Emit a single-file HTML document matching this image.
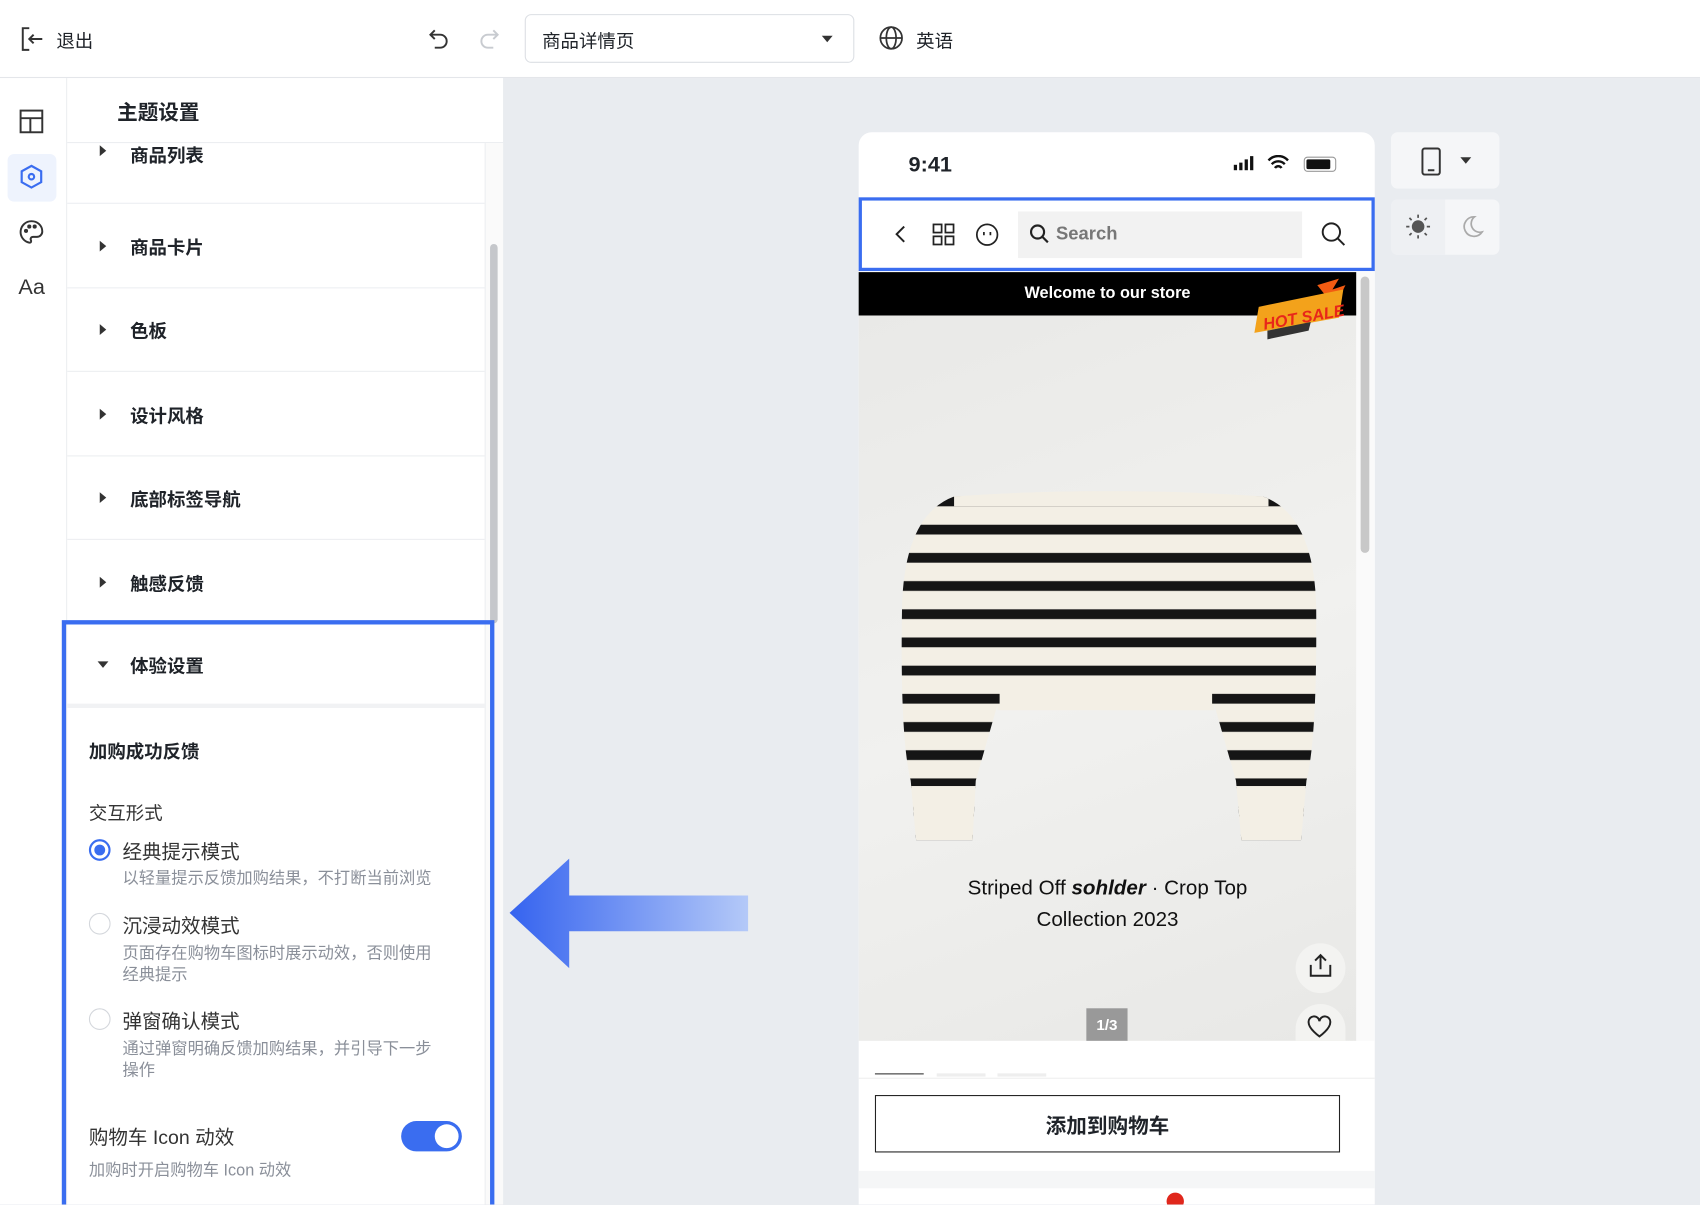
<!DOCTYPE html>
<html><head><meta charset="utf-8">
<style>
*{box-sizing:border-box;margin:0;padding:0}
html,body{width:1700px;height:1204px;overflow:hidden;background:#e9ecf0}
body{font-family:"Liberation Sans","Noto Sans CJK SC",sans-serif;color:#1f2329}
#w{position:absolute;left:0;top:0;width:1568px;height:1111px;transform:scale(1.08418);transform-origin:0 0;background:#e9ecf0;overflow:hidden}
.a{position:absolute}
.top{left:0;top:0;width:1568px;height:72px;background:#fff;border-bottom:1px solid #e4e6ea}
.rail{left:0;top:72px;width:62px;height:1039px;background:#fff;border-right:1px solid #eceef1}
.panel{left:62px;top:72px;width:402px;height:1039px;background:#fff}
.row{position:absolute;left:62px;width:385px;height:77px;border-bottom:1px solid #eceef1;font-size:17px;font-weight:bold;color:#1f2329}
.row .tri{position:absolute;left:30px;top:50%;margin-top:-5px;width:0;height:0;border-top:5px solid transparent;border-bottom:5px solid transparent;border-left:6px solid #333}
.row span{position:absolute;left:58px;top:50%;transform:translateY(-50%)}
.t{position:absolute;white-space:nowrap}
.radio{position:absolute;left:82px;width:20px;height:20px;border-radius:50%;border:1.5px solid #d4d7dc;background:#fff}
.sub{font-size:15px;color:#8a8f99;line-height:20px}
</style></head><body><div id="w">
<div class="a top"></div>
<svg class="a" style="left:18px;top:24px" width="24" height="24" viewBox="0 0 24 24" fill="none" stroke="#333" stroke-width="1.8"><path d="M9 2H3v20h6"/><path d="M21 12H9M13 8l-4 4 4 4"/></svg>
<div class="t" style="left:52px;top:24px;font-size:17px">退出</div>
<svg class="a" style="left:394px;top:25px" width="22" height="22" viewBox="0 0 22 22" fill="none" stroke="#333" stroke-width="1.8"><path d="M7 3L3 7l4 4"/><path d="M3 7h9a6 6 0 0 1 0 12H7"/></svg>
<svg class="a" style="left:440px;top:25px" width="22" height="22" viewBox="0 0 22 22" fill="none" stroke="#c8cbd0" stroke-width="1.8"><path d="M15 3l4 4-4 4"/><path d="M19 7h-9a6 6 0 0 0 0 12h5"/></svg>
<div class="a" style="left:484px;top:13px;width:304px;height:45px;border:1px solid #dcdfe4;border-radius:6px"></div>
<div class="t" style="left:500px;top:24px;font-size:17px">商品详情页</div>
<div class="a" style="left:758px;top:33px;border-left:5px solid transparent;border-right:5px solid transparent;border-top:6px solid #333"></div>
<svg class="a" style="left:810px;top:23px" width="24" height="24" viewBox="0 0 24 24" fill="none" stroke="#333" stroke-width="1.6"><circle cx="12" cy="12" r="10"/><ellipse cx="12" cy="12" rx="4.5" ry="10"/><path d="M2 12h20"/></svg>
<div class="t" style="left:845px;top:24px;font-size:17px">英语</div>

<div class="a rail"></div>
<svg class="a" style="left:17px;top:100px" width="24" height="24" viewBox="0 0 24 24" fill="none" stroke="#333" stroke-width="1.8"><rect x="2" y="2" width="20" height="20"/><path d="M2 9h20M11 9v13"/></svg>
<div class="a" style="left:7px;top:142px;width:45px;height:44px;background:#eef3fd;border-radius:6px"></div>
<svg class="a" style="left:17px;top:151px" width="24" height="24" viewBox="0 0 24 24" fill="none" stroke="#3a6df0" stroke-width="2"><path d="M12 2l9 5v10l-9 5-9-5V7z"/><circle cx="12" cy="12" r="2.5"/></svg>
<svg class="a" style="left:17px;top:202px" width="24" height="24" viewBox="0 0 24 24" fill="none" stroke="#333" stroke-width="1.8"><path d="M12 2a10 10 0 0 0-2 19.8c1.5.3 2.2-1 1.5-2.3-.8-1.5.3-3 2-3H17a5 5 0 0 0 5-5C22 6 17.5 2 12 2z"/><circle cx="7" cy="11" r="1" fill="#333"/><circle cx="10" cy="7" r="1" fill="#333"/><circle cx="15" cy="7" r="1" fill="#333"/></svg>
<div class="t" style="left:17px;top:254px;font-size:20px;color:#333">Aa</div>

<div class="a panel"></div>
<div class="t" style="left:108px;top:89px;font-size:19px;font-weight:bold">主题设置</div>
<div class="a" style="left:62px;top:131px;width:402px;height:1px;background:#eceef1"></div>
<div class="row" style="top:111px"><i class="tri" style="margin-top:-15px"></i><span style="margin-top:-7px">商品列表</span></div>
<div class="row" style="top:189px"><i class="tri"></i><span>商品卡片</span></div>
<div class="row" style="top:266px"><i class="tri"></i><span>色板</span></div>
<div class="row" style="top:344px"><i class="tri"></i><span>设计风格</span></div>
<div class="row" style="top:421px"><i class="tri"></i><span>底部标签导航</span></div>
<div class="row" style="top:499px"><i class="tri"></i><span>触感反馈</span></div>
<div class="a" style="left:447px;top:132px;width:17px;height:979px;background:#fafafa;border-left:1px solid #eceef1"></div>
<div class="a" style="left:452px;top:225px;width:7px;height:350px;background:#c5c7cb;border-radius:4px"></div>

<div class="row" style="top:576px;border-bottom:4px solid #f1f2f4"><i class="tri" style="left:28px;margin-top:-3px;border-left:5px solid transparent;border-right:5px solid transparent;border-top:6px solid #333;border-bottom:0"></i><span>体验设置</span></div>
<div class="t" style="left:82px;top:679px;font-size:17px;font-weight:bold">加购成功反馈</div>
<div class="t" style="left:82px;top:736px;font-size:17px;color:#333">交互形式</div>
<div class="radio" style="top:774px;border:2px solid #3a6df0"><div style="position:absolute;left:3px;top:3px;width:10px;height:10px;border-radius:50%;background:#3a6df0"></div></div>
<div class="t" style="left:113px;top:772px;font-size:18px;color:#333">经典提示模式</div>
<div class="t sub" style="left:113px;top:801px">以轻量提示反馈加购结果，不打断当前浏览</div>
<div class="radio" style="top:842px"></div>
<div class="t" style="left:113px;top:840px;font-size:18px;color:#333">沉浸动效模式</div>
<div class="t sub" style="left:113px;top:870px">页面存在购物车图标时展示动效，否则使用<br>经典提示</div>
<div class="radio" style="top:930px"></div>
<div class="t" style="left:113px;top:928px;font-size:18px;color:#333">弹窗确认模式</div>
<div class="t sub" style="left:113px;top:958px">通过弹窗明确反馈加购结果，并引导下一步<br>操作</div>
<div class="t" style="left:82px;top:1035px;font-size:18px;color:#333">购物车 Icon 动效</div>
<div class="a" style="left:370px;top:1034px;width:56px;height:28px;border-radius:14px;background:#3a6df0"><div style="position:absolute;right:3px;top:3px;width:22px;height:22px;border-radius:50%;background:#fff"></div></div>
<div class="t sub" style="left:82px;top:1070px">加购时开启购物车 Icon 动效</div>
<div class="a" style="left:57px;top:572px;width:399px;height:545px;border:4px solid #3a6df0"></div>

<svg class="a" style="left:468px;top:790px" width="226" height="105" viewBox="0 0 226 105"><defs><linearGradient id="g" x1="0" x2="1"><stop offset="0" stop-color="#3563ef"/><stop offset="1" stop-color="#b4c9f8"/></linearGradient></defs><path d="M2 52L57 2v34h165v33H57v34z" fill="url(#g)"/></svg>

<div class="a" style="left:792px;top:122px;width:476px;height:989px;background:#fff;border-radius:12px 12px 0 0"></div>
<div class="t" style="left:838px;top:141px;font-size:20px;font-weight:bold">9:41</div>
<svg class="a" style="left:1136px;top:143px" width="100" height="18" viewBox="0 0 100 18"><rect x="2" y="9" width="3" height="5" fill="#111"/><rect x="7" y="7" width="3" height="7" fill="#111"/><rect x="12" y="4" width="3" height="10" fill="#111"/><rect x="17" y="1" width="3" height="13" fill="#111"/><path d="M34 5a12 12 0 0 1 18 0M37 8.5a8 8 0 0 1 12 0M40 12a3.5 3.5 0 0 1 6 0" stroke="#111" stroke-width="2.2" fill="none"/><rect x="67" y="2" width="29" height="13" rx="3" fill="none" stroke="#999" stroke-width="1"/><rect x="69" y="4" width="22" height="9" rx="1.5" fill="#111"/></svg>
<div class="a" style="left:792px;top:182px;width:476px;height:68px;border:3px solid #3a6df0"></div>
<svg class="a" style="left:820px;top:205px" width="22" height="22" viewBox="0 0 22 22" fill="none" stroke="#222" stroke-width="1.8"><path d="M14 4l-7 7 7 7"/></svg>
<svg class="a" style="left:859px;top:205px" width="23" height="23" viewBox="0 0 23 23" fill="none" stroke="#222" stroke-width="1.6"><rect x="2" y="2" width="7.5" height="7.5"/><rect x="13" y="2" width="7.5" height="7.5"/><rect x="2" y="13" width="7.5" height="7.5"/><rect x="13" y="13" width="7.5" height="7.5"/></svg>
<svg class="a" style="left:899px;top:205px" width="23" height="23" viewBox="0 0 23 23" fill="none" stroke="#222" stroke-width="1.6"><circle cx="11.5" cy="11.5" r="9.5"/><path d="M8.5 9v3M14.5 9v3"/></svg>
<div class="a" style="left:939px;top:195px;width:262px;height:43px;background:#f2f2f2"></div>
<svg class="a" style="left:948px;top:205px" width="22" height="22" viewBox="0 0 22 22" fill="none" stroke="#222" stroke-width="2"><circle cx="9" cy="9" r="6"/><path d="M13.5 13.5l5 5"/></svg>
<div class="t" style="left:974px;top:206px;font-size:17px;font-weight:bold;color:#777">Search</div>
<svg class="a" style="left:1217px;top:203px" width="26" height="26" viewBox="0 0 26 26" fill="none" stroke="#222" stroke-width="1.8"><circle cx="11" cy="11" r="8"/><path d="M17 17l6 6"/></svg>
<div class="a" style="left:792px;top:251px;width:459px;height:40px;background:#000"></div>
<div class="t" style="left:792px;top:262px;width:459px;text-align:center;font-size:15px;font-weight:bold;color:#fff">Welcome to our store</div>
<div class="a" style="left:792px;top:291px;width:459px;height:669px;background:linear-gradient(160deg,#e9e9e7,#f1f1ef 50%,#e8e8e6)"></div>
<svg class="a" style="left:1155px;top:255px" width="92" height="60" viewBox="0 0 92 60"><path d="M60 8l20-6-6 10 12-4-10 20z" fill="#f25b12"/><path d="M6 28L84 12l-4 26L2 52z" fill="#f3a21b"/><text x="10" y="44" font-family="Liberation Sans" font-style="italic" font-weight="bold" font-size="15" fill="#e8261a" transform="rotate(-10 40 40)">HOT SALE</text><path d="M14 50l40-8-2 8-38 8z" fill="#333"/></svg>
<div class="a" style="left:1251px;top:251px;width:17px;height:709px;background:#fafafa"></div>
<div class="a" style="left:1255px;top:255px;width:8px;height:255px;background:#c8c8c8;border-radius:4px"></div>
<svg class="a" style="left:825px;top:445px" width="400" height="340" viewBox="825 445 400 340">
<defs><pattern id="st" x="0" y="470" width="400" height="26" patternUnits="userSpaceOnUse"><rect width="400" height="26" fill="#f3efe5"/><rect y="14" width="400" height="9" fill="#151515"/></pattern>
<clipPath id="c"><path d="M880 458Q1020 448 1165 458Q1212 475 1214 560Q1215 680 1205 720L1200 775L1145 775L1140 720L1120 650L1120 655L920 655L920 650L900 720L897 775L845 775L840 720Q830 680 832 560Q834 475 880 458z"/></clipPath></defs>
<g clip-path="url(#c)"><rect x="825" y="445" width="400" height="340" fill="url(#st)"/><rect x="835" y="725" width="380" height="60" fill="#f3efe5"/><rect x="922" y="628" width="196" height="27" fill="#f3efe5"/><rect x="880" y="445" width="290" height="22" fill="#f3efe5"/></g>
</svg>
<div class="t" style="left:792px;top:805px;width:459px;text-align:center;font-size:19px;line-height:29px;color:#111">Striped Off <i style="font-weight:bold">sohlder</i> · Crop Top<br>Collection 2023</div>
<div class="a" style="left:1195px;top:870px;width:46px;height:46px;border-radius:50%;background:#f3f3f1"></div>
<svg class="a" style="left:1205px;top:878px" width="26" height="26" viewBox="0 0 26 26" fill="none" stroke="#222" stroke-width="1.8"><path d="M13 3v13M8 8l5-5 5 5M4 12v10h18V12"/></svg>
<div class="a" style="left:1195px;top:926px;width:46px;height:34px;border-radius:23px 23px 0 0;background:#f3f3f1"></div>
<svg class="a" style="left:1204px;top:935px" width="26" height="24" viewBox="0 0 26 24" fill="none" stroke="#222" stroke-width="1.8"><path d="M13 21S3 14 3 8a5 5 0 0 1 10-1 5 5 0 0 1 10 1c0 6-10 13-10 13z"/></svg>
<div class="a" style="left:1002px;top:930px;width:38px;height:30px;background:#999;color:#fff;font-size:14px;font-weight:bold;text-align:center;line-height:30px">1/3</div>
<div class="a" style="left:807px;top:990px;width:45px;height:3px;border-top:1px solid #333"></div>
<div class="a" style="left:864px;top:990px;width:45px;height:3px;background:#eee"></div>
<div class="a" style="left:920px;top:990px;width:45px;height:3px;background:#eee"></div>
<div class="a" style="left:792px;top:994px;width:476px;height:1px;background:#eee"></div>
<div class="a" style="left:807px;top:1010px;width:429px;height:53px;border:1.5px solid #222"></div>
<div class="t" style="left:807px;top:1024px;width:429px;text-align:center;font-size:19px;font-weight:bold">添加到购物车</div>
<div class="a" style="left:792px;top:1080px;width:476px;height:16px;background:#f5f6f7"></div>
<div class="a" style="left:1076px;top:1100px;width:16px;height:16px;border-radius:50%;background:#e0271c"></div>

<div class="a" style="left:1283px;top:122px;width:100px;height:52px;background:#f5f6f8;border-radius:6px"></div>
<svg class="a" style="left:1310px;top:136px" width="20" height="26" viewBox="0 0 20 26" fill="none" stroke="#333" stroke-width="1.8"><rect x="2" y="1" width="16" height="24" rx="2"/><path d="M7 21h6"/></svg>
<div class="a" style="left:1347px;top:145px;border-left:5px solid transparent;border-right:5px solid transparent;border-top:6px solid #333"></div>
<div class="a" style="left:1283px;top:184px;width:100px;height:51px;background:#f5f6f8;border-radius:6px"></div>
<div class="a" style="left:1283px;top:184px;width:50px;height:51px;background:#eef0f3;border-radius:6px 0 0 6px"></div>
<svg class="a" style="left:1296px;top:197px" width="24" height="24" viewBox="0 0 24 24" fill="none" stroke="#555" stroke-width="1.6"><circle cx="12" cy="12" r="5" fill="#555"/><path d="M12 1v3M12 20v3M1 12h3M20 12h3M4 4l2 2M18 18l2 2M4 20l2-2M18 6l2-2"/></svg>
<svg class="a" style="left:1346px;top:197px" width="24" height="24" viewBox="0 0 24 24" fill="none" stroke="#aaa" stroke-width="1.6"><path d="M14 3a9 9 0 1 0 7 14A8 8 0 0 1 14 3z"/></svg>
</div></body></html>
